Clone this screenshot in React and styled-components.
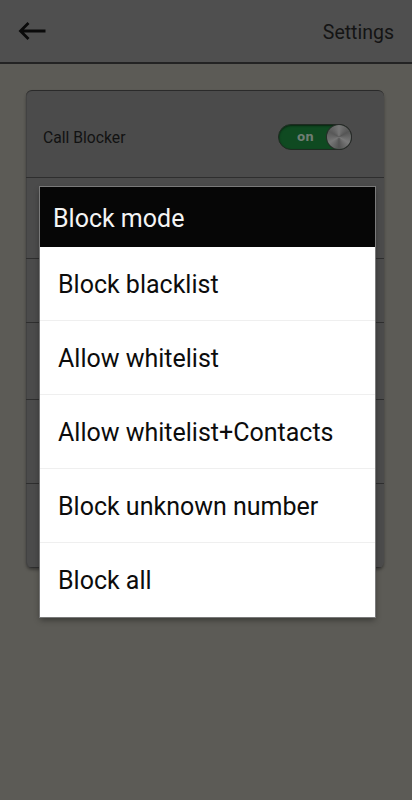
import React, { useState } from 'react'
import styled, { createGlobalStyle } from 'styled-components'

const Global = createGlobalStyle`
  html, body { margin: 0; padding: 0; }
  body { background: #5c5b56; font-family: Roboto, "Noto Sans", sans-serif; }
`

const modes = [
  'Block blacklist',
  'Allow whitelist',
  'Allow whitelist+Contacts',
  'Block unknown number',
  'Block all',
]

const rowHeights = [81, 64, 77, 84, 84]

export default function App() {
  const [mode, setMode] = useState(0)
  return (
    <Screen>
      <Global />
      <Header>
        <BackButton aria-label="back">
          <svg width="30" height="20" viewBox="0 0 30 20">
            <path d="M28.5 10H3.5M11.5 2L3.5 10l8 8" fill="none" stroke="#0a0a0a" strokeWidth="2.8" />
          </svg>
        </BackButton>
        <Title>Settings</Title>
      </Header>
      <Body>
        <Card>
          <MainRow>
            <Label>Call Blocker</Label>
            <Toggle>
              <ToggleText>on</ToggleText>
              <Knob />
            </Toggle>
          </MainRow>
          {rowHeights.map((h, i) => (
            <Row key={i} style={{ height: h }} />
          ))}
        </Card>
      </Body>
      <Dialog>
        <DialogTitle>Block mode</DialogTitle>
        {modes.map((m, i) => (
          <Item key={m} $last={i === modes.length - 1} onClick={() => setMode(i)}>
            {m}
          </Item>
        ))}
      </Dialog>
    </Screen>
  )
}

const Screen = styled.div`
  position: relative;
  width: 412px;
  height: 800px;
  overflow: hidden;
  background: #5c5b56;
`
const Header = styled.div`
  height: 62px;
  background: #4f4f4f;
  border-bottom: 2px solid #232323;
  display: flex;
  align-items: center;
  justify-content: space-between;
  padding: 0 18px 0 17px;
`
const BackButton = styled.div`
  display: flex;
  align-items: center;
  margin-top: -1px;
`
const Title = styled.div`
  font-size: 19.5px;
  color: #141414;
  margin-top: 3px;
`
const Body = styled.div`
  padding: 26px 28px 0 26px;
`
const Card = styled.div`
  background: #4b4b4b;
  border-radius: 6px;
  border-top: 1px solid #2a2a2a;
  box-shadow: 0 2px 3px rgba(0, 0, 0, 0.35), inset 1px 0 0 #424242;
  overflow: hidden;
`
const MainRow = styled.div`
  height: 87px;
  box-sizing: border-box;
  display: flex;
  align-items: center;
  justify-content: space-between;
  padding: 6px 32px 0 17px;
  border-bottom: 1px solid #2e2e2e;
`
const Row = styled.div`
  border-bottom: 1px solid #2e2e2e;
  box-sizing: border-box;
`
const Label = styled.div`
  font-size: 15.7px;
  color: #121212;
`
const Toggle = styled.div`
  width: 74px;
  height: 26px;
  border-radius: 13px;
  background: #0f4a21;
  border: 1px solid #1e2a20;
  box-shadow: inset 0 1px 2px rgba(0, 0, 0, 0.5);
  display: flex;
  align-items: center;
  justify-content: space-between;
  padding: 0 0 0 18px;
  box-sizing: border-box;
`
const ToggleText = styled.span`
  font-family: "DejaVu Sans", sans-serif;
  font-weight: bold;
  font-size: 12px;
  color: #6f7d73;
`
const Knob = styled.div`
  width: 24px;
  height: 24px;
  border-radius: 50%;
  background: conic-gradient(#777, #555, #7a7a7a, #535353, #777, #585858, #777);
  box-shadow: 0 0 0 1px #2a2a2a;
`
const Dialog = styled.div`
  position: absolute;
  left: 40px;
  top: 187px;
  width: 335px;
  background: #fff;
  box-shadow: 0 0 0 1px #7a7a7a, 0 3px 6px rgba(0, 0, 0, 0.4);
`
const DialogTitle = styled.div`
  height: 60px;
  background: #060606;
  color: #f4f4f4;
  font-size: 25px;
  display: flex;
  align-items: center;
  padding: 3px 0 0 13px;
  box-sizing: border-box;
`
const Item = styled.div`
  height: 74px;
  box-sizing: border-box;
  display: flex;
  align-items: center;
  padding: 1px 0 0 18px;
  font-size: 25px;
  color: #0c0c0c;
  border-bottom: ${p => (p.$last ? 'none' : '1px solid #efefef')};
  cursor: pointer;
`
